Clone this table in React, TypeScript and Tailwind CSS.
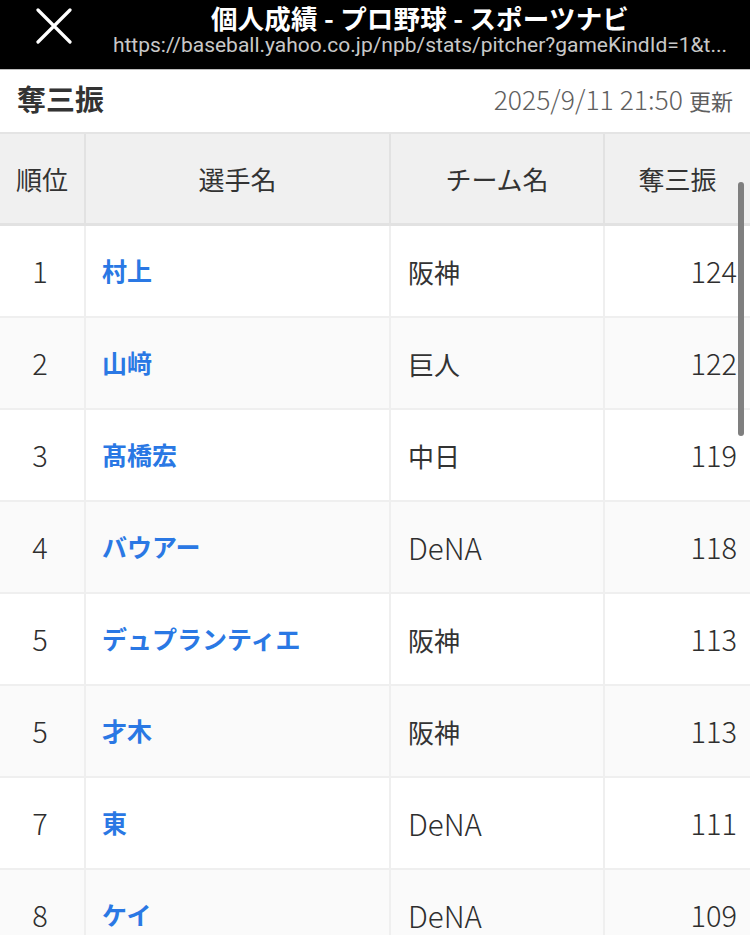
import React from "react";

const rows = [
  { rank: "1", name: "村上", team: "阪神", k: "124" },
  { rank: "2", name: "山﨑", team: "巨人", k: "122" },
  { rank: "3", name: "髙橋宏", team: "中日", k: "119" },
  { rank: "4", name: "バウアー", team: "DeNA", k: "118" },
  { rank: "5", name: "デュプランティエ", team: "阪神", k: "113" },
  { rank: "5", name: "才木", team: "阪神", k: "113" },
  { rank: "7", name: "東", team: "DeNA", k: "111" },
  { rank: "8", name: "ケイ", team: "DeNA", k: "109" },
];

const cjk = { fontFamily: '"Noto Sans CJK JP", "Noto Sans", sans-serif' };

export default function App() {
  return (
    <div
      className="relative w-[750px] h-[935px] overflow-hidden bg-white text-[#333]"
      style={cjk}
    >
      {/* top bar */}
      <div className="flex h-[70px] bg-black border-b border-[#bdbdbd]">
        <div className="w-[90px] flex items-start pt-[8px] pl-[36px]">
          <svg width="36" height="36" viewBox="0 0 36 36">
            <path d="M2 2 L34 34 M34 2 L2 34" stroke="white" strokeWidth="3.2" strokeLinecap="round" />
          </svg>
        </div>
        <div className="flex-1 flex flex-col items-center">
          <div className="text-white font-bold text-[26.5px] leading-[32px] mt-[2px] tracking-[0.2px]">
            個人成績 - プロ野球 - スポーツナビ
          </div>
          <div
            className="text-[#c8c8c8] text-[21px] leading-[24px] mt-[-1px]"
            style={{ fontFamily: '"Roboto", "Liberation Sans", sans-serif' }}
          >
            https://baseball.yahoo.co.jp/npb/stats/pitcher?gameKindId=1&t...
          </div>
        </div>
      </div>

      {/* title row */}
      <div className="flex items-center justify-between h-[62px] pl-[17px] pr-[17px]">
        <div className="font-bold text-[29px] text-[#333] mt-[-4px]">奪三振</div>
        <div className="text-[#5f5f5f] mt-[-4px] flex items-baseline">
          <span className="text-[26.5px] font-light">2025/9/11 21:50</span>
          <span className="text-[22px] ml-[6px]">更新</span>
        </div>
      </div>

      {/* table */}
      <div className="border-t-2 border-[#e4e4e4]">
        <div className="flex h-[92px] bg-[#f0f0f0] border-b-[3px] border-[#e2e2e2] text-[26px] text-[#333]">
          <div className="w-[86px] flex items-center justify-center border-r-2 border-[#e2e2e2]">順位</div>
          <div className="w-[305px] flex items-center justify-center border-r-2 border-[#e2e2e2]">選手名</div>
          <div className="w-[214px] flex items-center justify-center border-r-2 border-[#e2e2e2]">チーム名</div>
          <div className="flex-1 flex items-center justify-center">奪三振</div>
        </div>
        {rows.map((r, i) => (
          <div
            key={i}
            className={`flex h-[92px] border-b-2 border-[#efefef] ${
              i % 2 === 1 ? "bg-[#fafafa]" : "bg-white"
            }`}
          >
            <div className="w-[86px] flex items-center justify-center border-r-2 border-[#efefef] pr-[4px] text-[29px] font-light tabular-nums text-[#2e2e2e]">
              {r.rank}
            </div>
            <div className="w-[305px] flex items-center pl-[16px] border-r-2 border-[#efefef] font-bold text-[25px] text-[#2a78e4]">
              {r.name}
            </div>
            <div
              className={`w-[214px] flex items-center pl-[17px] border-r-2 border-[#efefef] ${
                r.team === "DeNA" ? "text-[29.5px] font-light text-[#2e2e2e]" : "text-[26px]"
              }`}
            >
              {r.team}
            </div>
            <div className="flex-1 flex items-center justify-end pr-[13px] text-[29px] font-light tabular-nums text-[#2e2e2e]">
              {r.k}
            </div>
          </div>
        ))}
      </div>

      {/* scrollbar */}
      <div className="absolute left-[738px] top-[182px] w-[6px] h-[254px] rounded-full bg-[#7f7f7f]" />
    </div>
  );
}
